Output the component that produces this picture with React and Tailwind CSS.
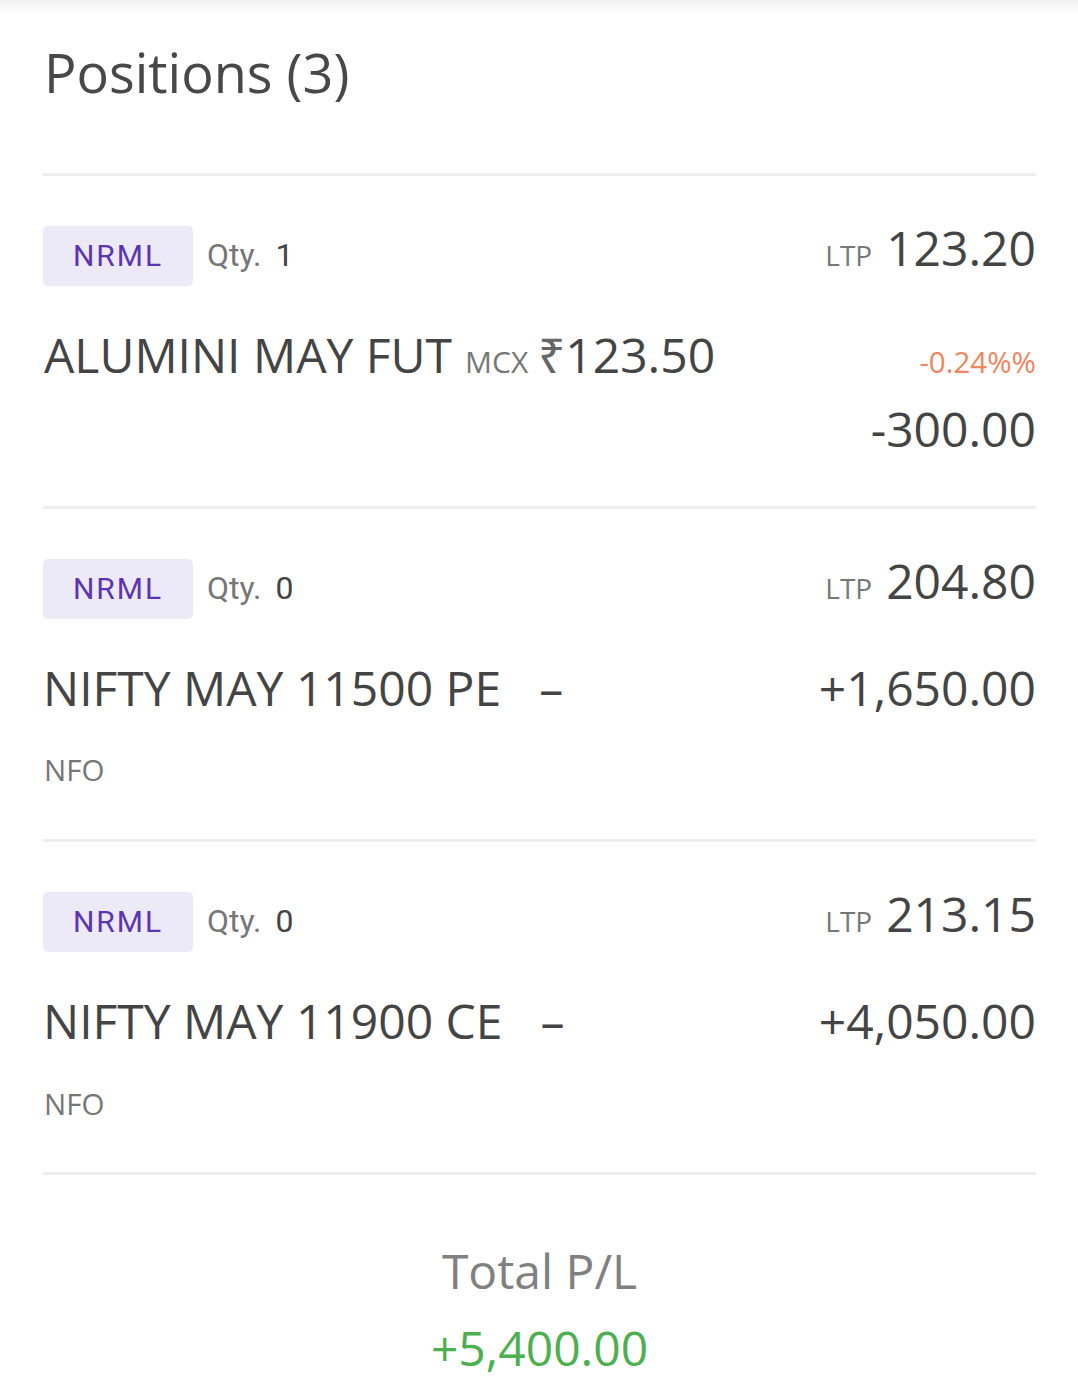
import React from "react";

const OS = { fontFamily: '"Open Sans", "Liberation Sans", sans-serif' };
const RB = { fontFamily: 'Roboto, "Liberation Sans", sans-serif' };

function Divider() {
  return <div className="h-[3px] bg-[#eeeeee]" />;
}

function TopRow({ qty, ltp }) {
  return (
    <div className="flex items-baseline justify-between">
      <div className="flex items-baseline">
        <div
          className="w-[150px] h-[60px] leading-[60px] text-center rounded-[5px] bg-[#edeaf7] text-[#5e35b1] text-[30px] tracking-[2px]"
          style={RB}
        >
          NRML
        </div>
        <span className="ml-[14px] text-[32px] leading-none text-[#777777]" style={RB}>
          Qty.
        </span>
        <span className="ml-[14px] text-[32px] leading-none text-[#444444]" style={RB}>
          {qty}
        </span>
      </div>
      <div className="flex items-baseline">
        <span className="text-[28px] leading-none text-[#777777]">LTP</span>
        <span className="ml-[14px] text-[48px] leading-none text-[#444444]">{ltp}</span>
      </div>
    </div>
  );
}

function NfoCard({ name, ltp, pl }) {
  return (
    <div className="pt-[47.7px] pb-[54.2px]">
      <TopRow qty="0" ltp={ltp} />
      <div className="mt-[45.4px] flex items-baseline justify-between">
        <div className="flex items-baseline">
          <span className="text-[48px] leading-none text-[#444444]">{name}</span>
          <span className="ml-[38px] text-[48px] leading-none text-[#444444]">–</span>
        </div>
        <span className="text-[48px] leading-none text-[#444444]">{pl}</span>
      </div>
      <div className="mt-[43.4px] pl-[1px] text-[29.5px] leading-none text-[#777777]">NFO</div>
    </div>
  );
}

export default function App() {
  return (
    <div className="bg-white w-[1078px] min-h-[1399px]" style={OS}>
      <div className="h-[14px] bg-gradient-to-b from-[#f2f2f2] to-white" />
      <div className="pl-[43px] pr-[42px] pt-[31px] pb-[40px]">
        <h1 className="pl-[1px] text-[54px] leading-none text-[#484848] font-normal">
          Positions (3)
        </h1>
        <div className="mt-[74px]">
          <Divider />
          <div className="pt-[47.7px] pb-[53px]">
            <TopRow qty="1" ltp="123.20" />
            <div className="mt-[45.4px] flex items-baseline justify-between">
              <div className="flex items-baseline pl-[1px]">
                <span className="text-[48px] leading-none text-[#444444]">ALUMINI MAY FUT</span>
                <span className="ml-[13px] text-[30px] leading-none text-[#777777]">MCX</span>
                <span className="ml-[10px] text-[48px] leading-none text-[#666666]">₹</span>
                <span className="text-[48px] leading-none text-[#444444]">123.50</span>
              </div>
              <span className="text-[29.5px] leading-none text-[#f0845e]">-0.24%%</span>
            </div>
            <div className="mt-[25.8px] text-right text-[48px] leading-none text-[#444444]">
              -300.00
            </div>
          </div>
          <Divider />
          <NfoCard name="NIFTY MAY 11500 PE" ltp="204.80" pl="+1,650.00" />
          <Divider />
          <NfoCard name="NIFTY MAY 11900 CE" ltp="213.15" pl="+4,050.00" />
          <Divider />
        </div>
        <div className="mt-[71.5px] flex flex-col items-center">
          <div className="text-[48px] leading-none text-[#808080]">Total P/L</div>
          <div className="mt-[29px] text-[48px] leading-none text-[#4caf50]">+5,400.00</div>
        </div>
      </div>
    </div>
  );
}
